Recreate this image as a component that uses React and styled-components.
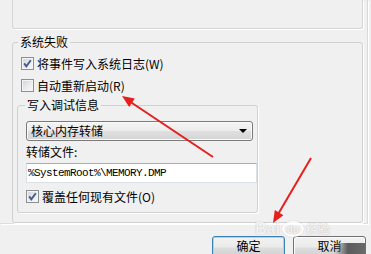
import React from "react";
import styled, { createGlobalStyle } from "styled-components";

const GlobalStyle = createGlobalStyle`
  html, body {
    margin: 0;
    padding: 0;
    background: #f0f0f0;
  }
  body {
    font-family: "Noto Sans CJK SC", "Noto Sans", sans-serif;
    font-size: 12px;
    color: #000;
  }
`;

function CheckBox({ checked }) {
     return (
          <STCheck>
               {checked && (
                    <svg width="11" height="11" viewBox="0 0 11 11">
                         <path d="M2.2 5.4 L4.3 8.3 L8.8 2.2" fill="none" stroke="#46598f" strokeWidth="1.9" />
                    </svg>
               )}
          </STCheck>
     );
}

function Arrows() {
     return (
          <STOverlay width="371" height="254" viewBox="0 0 371 254">
               <line x1="213" y1="157" x2="129" y2="101" stroke="#e3201d" strokeWidth="2" />
               <polygon points="122,96 134.8,98.5 129.2,106.9" fill="#e3201d" />
               <line x1="311" y1="158" x2="277" y2="216" stroke="#e3201d" strokeWidth="2" />
               <polygon points="273,223 274.8,210.1 283.4,215.2" fill="#e3201d" />
          </STOverlay>
     );
}

function App() {
     return (
          <STDialog>
               <GlobalStyle />
               <STPage>
                    <STTopGroup />
                    <STGroup $mt={6} $pb={9}>
                         <STLegend $ml={5}>系统失败</STLegend>
                         <STRow $mt={8} $ml={8}>
                              <CheckBox checked />
                              <span>将事件写入系统日志(W)</span>
                         </STRow>
                         <STRow $mt={9} $ml={8}>
                              <CheckBox />
                              <span>自动重新启动(R)</span>
                         </STRow>
                         <STGroup $mt={6} $ml={4} $mr={4} $pb={9}>
                              <STLegend $ml={7}>写入调试信息</STLegend>
                              <STSelect>
                                   <span>核心内存转储</span>
                                   <i className="caret" />
                              </STSelect>
                              <STLabel>转储文件:</STLabel>
                              <STInput>%SystemRoot%\MEMORY.DMP</STInput>
                              <STRow $mt={7} $ml={8}>
                                   <CheckBox checked />
                                   <span>覆盖任何现有文件(O)</span>
                              </STRow>
                         </STGroup>
                    </STGroup>
               </STPage>
               <STButtons>
                    <STButton $primary>确定</STButton>
                    <STButton>取消</STButton>
               </STButtons>
               <STWatermark>
                    <b>Bai</b>
                    <em>du</em>
                    <span>经验</span>
               </STWatermark>
               <STSmudge />
               <Arrows />
          </STDialog>
     );
}

export default App;

const STDialog = styled.div`
     position: relative;
     width: 371px;
     height: 254px;
     overflow: hidden;
     background: #f0f0f0;
     display: flex;
     flex-direction: column;
`;

const STPage = styled.div`
     box-sizing: border-box;
     width: 368px;
     height: 226px;
     padding: 0 4px 0 12px;
     border-right: 1px solid #d9d9d9;
     border-bottom: 1px solid #dedede;
     box-shadow: 1px 1px 0 #fff;
     display: flex;
     flex-direction: column;
`;

const STTopGroup = styled.div`
     box-sizing: border-box;
     height: 29px;
     flex: none;
     border: 1px solid #d5d5d5;
     border-top: none;
     border-radius: 0 0 3px 3px;
     box-shadow: 1px 1px 0 #fff;
`;

const STGroup = styled.fieldset`
     margin: ${(p) => p.$mt}px ${(p) => p.$mr || 0}px 0 ${(p) => p.$ml || 0}px;
     padding: 0 0 ${(p) => p.$pb}px 0;
     min-width: 0;
     border: 1px solid #d0d0d0;
     border-radius: 3px;
     box-shadow: 1px 1px 0 #fff;
     display: flex;
     flex-direction: column;
     align-items: flex-start;
`;

const STLegend = styled.legend`
     margin-left: ${(p) => p.$ml}px;
     padding: 0 2px;
     line-height: 14px;
     font-size: 12px;
`;

const STRow = styled.div`
     display: flex;
     align-items: center;
     gap: 3px;
     height: 13px;
     margin: ${(p) => p.$mt}px 0 0 ${(p) => p.$ml}px;
     line-height: 14px;
     white-space: nowrap;
`;

const STCheck = styled.span`
     box-sizing: border-box;
     width: 13px;
     height: 13px;
     flex: none;
     display: flex;
     align-items: center;
     justify-content: center;
     border: 1px solid #8e8f8f;
     background: linear-gradient(135deg, #cfd2d6 0%, #eceef0 60%, #f8f8f8 100%);
     box-shadow: inset 0 0 0 1px #f4f4f4;
`;

const STSelect = styled.div`
     box-sizing: border-box;
     width: 227px;
     height: 20px;
     margin: 9px 0 0 8px;
     padding: 0 5px 0 4px;
     display: flex;
     align-items: center;
     justify-content: space-between;
     border: 1px solid #7a7a7a;
     border-radius: 3px;
     background: linear-gradient(#f4f4f4 0%, #ececec 48%, #dfdfdf 52%, #d4d4d4 100%);
     box-shadow: inset 0 0 0 1px #fbfbfb;
     line-height: 14px;
     .caret {
          width: 0;
          height: 0;
          border-left: 4px solid transparent;
          border-right: 4px solid transparent;
          border-top: 4px solid #000;
     }
`;

const STLabel = styled.div`
     margin: 4px 0 0 8px;
     line-height: 14px;
`;

const STInput = styled.div`
     box-sizing: border-box;
     width: 231px;
     height: 20px;
     margin: 4px 0 0 8px;
     padding-left: 1px;
     display: flex;
     align-items: center;
     background: #fff;
     border: 1px solid #dbdfe6;
     border-top-color: #abadb3;
     font-family: "Liberation Mono", "DejaVu Sans Mono", monospace;
     font-size: 11px;
     letter-spacing: -0.6px;
     white-space: nowrap;
`;

const STButtons = styled.div`
     display: flex;
     justify-content: flex-end;
     gap: 8px;
     margin-top: 12px;
     padding-right: 5px;
`;

const STButton = styled.div`
     box-sizing: border-box;
     width: 73px;
     height: 23px;
     flex: none;
     display: flex;
     align-items: flex-start;
     justify-content: center;
     padding-top: 2px;
     border: 1px solid ${(p) => (p.$primary ? "#3c7fb1" : "#707070")};
     border-radius: 3px;
     background: linear-gradient(#f2f2f2 0%, #ebebeb 48%, #dddddd 52%, #cfcfcf 100%);
     box-shadow: inset 0 0 0 1px ${(p) => (p.$primary ? "#9fd9f5" : "#fbfbfb")};
     font-size: 12px;
     line-height: 14px;
`;

const STWatermark = styled.div`
     position: absolute;
     left: 255px;
     top: 221px;
     height: 16px;
     display: flex;
     align-items: center;
     gap: 2px;
     color: rgba(255, 255, 255, 0.85);
     text-shadow: 0 0 1px rgba(110, 110, 110, 0.55);
     font-family: "Liberation Sans", Arial, sans-serif;
     line-height: 16px;
     b {
          font-size: 16px;
          font-weight: bold;
     }
     em {
          box-sizing: border-box;
          font-style: normal;
          font-size: 10px;
          line-height: 10px;
          font-weight: bold;
          width: 22px;
          height: 16px;
          display: flex;
          align-items: flex-end;
          justify-content: center;
          border-radius: 50%;
          border: 2px solid rgba(255, 255, 255, 0.8);
          box-shadow: 0 0 1px rgba(110, 110, 110, 0.5);
     }
     span {
          font-family: "Noto Sans CJK SC", sans-serif;
          font-size: 12px;
          line-height: 14px;
          font-weight: bold;
     }
`;

const STSmudge = styled.div`
     position: absolute;
     left: 334px;
     top: 243px;
     width: 31px;
     height: 11px;
     background: linear-gradient(to right, rgba(90, 90, 90, 0), #5c5c5c 45%, #6a6a6a 100%);
`;

const STOverlay = styled.svg`
     position: absolute;
     left: 0;
     top: 0;
     pointer-events: none;
`;
